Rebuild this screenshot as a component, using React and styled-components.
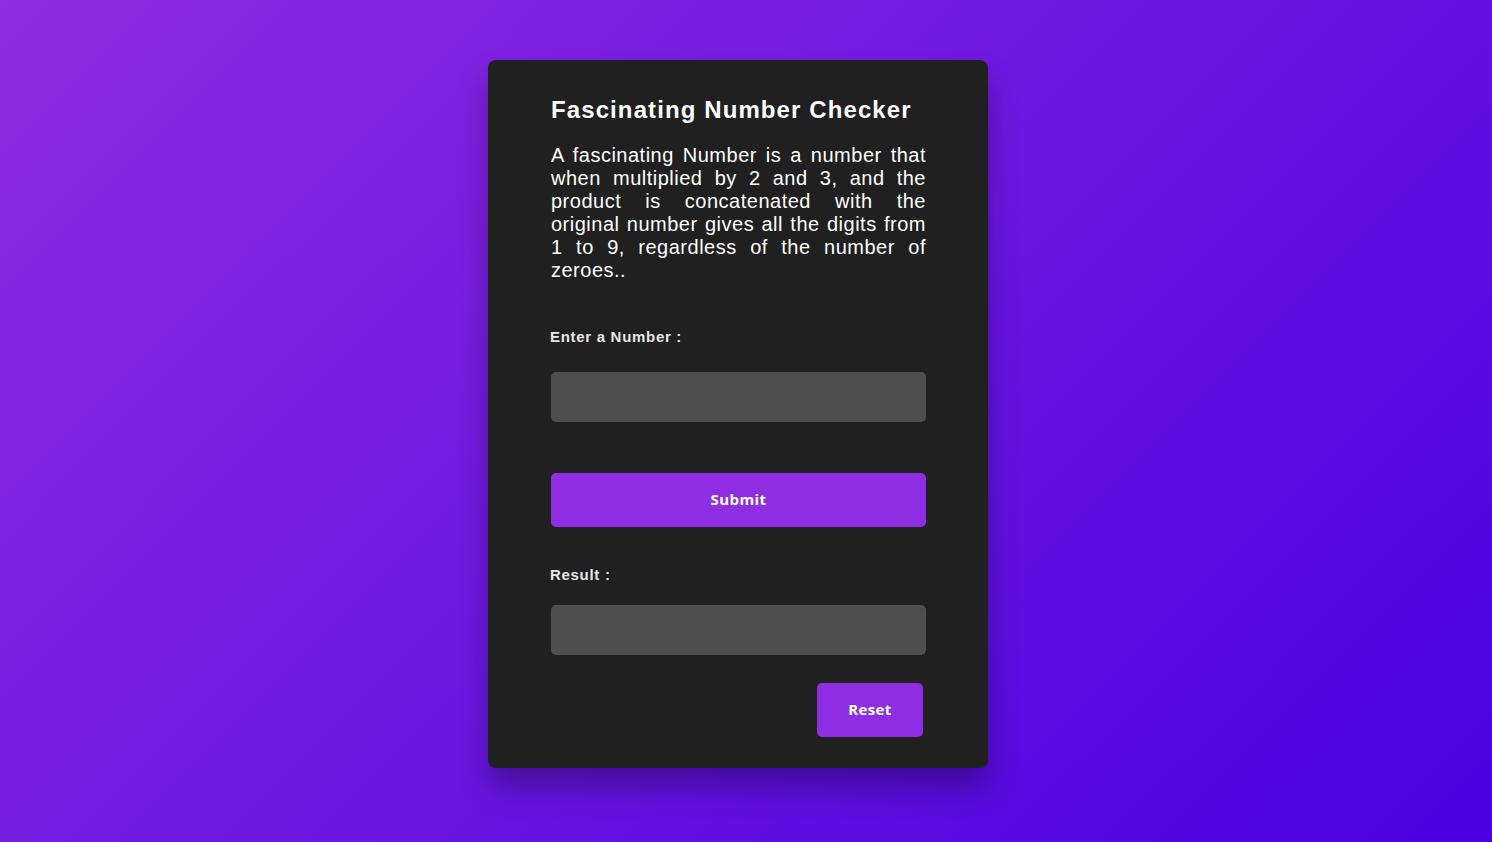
import React from "react";
import styled, { createGlobalStyle } from "styled-components";

const Global = createGlobalStyle`
  html, body { margin: 0; padding: 0; }
  body {
    min-height: 842px;
    background: linear-gradient(135deg, #8e2de2 0%, #4a00e0 100%);
    font-family: "Liberation Sans", Arial, sans-serif;
  }
`;

const Page = styled.div`
  display: flex;
  justify-content: center;
  align-items: flex-start;
  padding: 60px 16px 0 0;
  min-height: 842px;
  box-sizing: border-box;
`;

const Card = styled.div`
  width: 500px;
  box-sizing: border-box;
  background: #202020;
  border-radius: 8px;
  padding: 36px 62px 31px 63px;
  box-shadow: 0 20px 30px rgba(0, 0, 0, 0.3);
  display: flex;
  flex-direction: column;
`;

const Title = styled.h1`
  margin: 0;
  color: #fff;
  font-size: 24px;
  font-weight: 700;
  letter-spacing: 1.1px;
  line-height: 28px;
  white-space: nowrap;
`;

const Desc = styled.p`
  margin: 20px 0 0;
  color: #fff;
  font-size: 20px;
  line-height: 23px;
  text-align: justify;
  letter-spacing: 0.5px;
`;

const Label = styled.label`
  display: block;
  margin: ${(p) => p.$top}px 0 0 -1px;
  color: #e6e6e6;
  font-size: 15px;
  font-weight: 700;
  line-height: 17px;
  letter-spacing: 0.7px;
`;

const Field = styled.div`
  margin-top: ${(p) => p.$top}px;
  height: 50px;
  background: #4f4f4f;
  border-radius: 5px;
`;

const Input = styled.input`
  width: 100%;
  height: 50px;
  box-sizing: border-box;
  margin: ${(p) => p.$top}px 0 0;
  background: #4f4f4f;
  border: none;
  border-radius: 5px;
  outline: none;
  color: #fff;
  padding: 0 12px;
  font-size: 16px;
  font-family: inherit;
`;

const Button = styled.button`
  height: 54px;
  border: none;
  border-radius: 5px;
  background: #8e2de2;
  color: #fff;
  font-family: "Open Sans", "Noto Sans", sans-serif;
  font-weight: 700;
  font-size: 15px;
  letter-spacing: 0.4px;
  padding: 0 0 2px;
  cursor: pointer;
  margin-top: ${(p) => p.$top}px;
  width: ${(p) => p.$width};
`;

const Actions = styled.div`
  display: flex;
  justify-content: flex-end;
  padding-right: 3px;
`;

export default function App() {
  return (
    <>
      <Global />
      <Page>
        <Card>
          <Title>Fascinating Number Checker</Title>
          <Desc>
            A fascinating Number is a number that when multiplied by 2 and 3,
            and the product is concatenated with the original number gives all
            the digits from 1 to 9, regardless of the number of zeroes..
          </Desc>
          <Label $top={46}>Enter a Number :</Label>
          <Input $top={27} type="text" />
          <Button $top={51} $width="100%">Submit</Button>
          <Label $top={39}>Result :</Label>
          <Field $top={22} />
          <Actions>
            <Button $top={28} $width="106px">Reset</Button>
          </Actions>
        </Card>
      </Page>
    </>
  );
}
